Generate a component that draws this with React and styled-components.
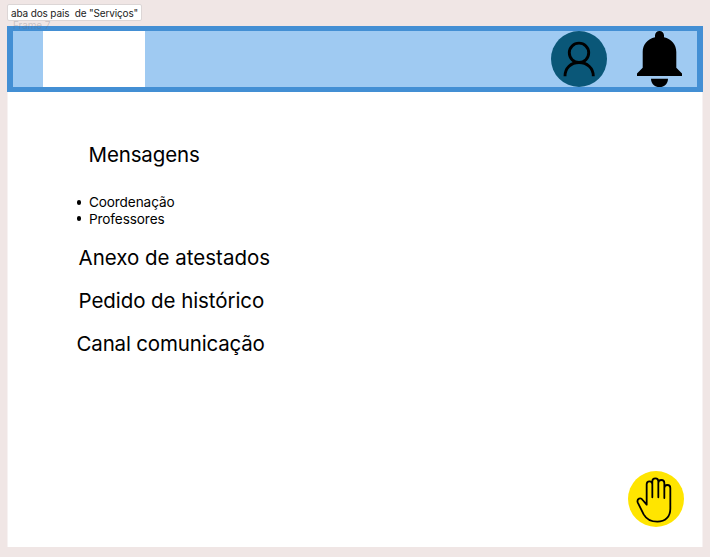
import React from "react";
import styled, { createGlobalStyle } from "styled-components";

const GlobalStyle = createGlobalStyle`
  * { box-sizing: border-box; }
  body { margin: 0; background: #f0e6e5; overflow: hidden; }
`;

const Canvas = styled.main`
  position: relative;
  width: 710px;
  height: 557px;
  padding: 26px 7px 10px;
  font-family: Inter, sans-serif;
  color: #000;
`;

const FrameLabel = styled.span`
  position: absolute;
  left: 13px;
  top: 19px;
  font-size: 10px;
  line-height: 12px;
  letter-spacing: -0.1px;
  color: rgba(110, 110, 120, 0.32);
`;

const NameTag = styled.div`
  position: absolute;
  left: 7px;
  top: 4px;
  width: 135px;
  height: 17px;
  padding-left: 3px;
  border: 1px solid #dcd6d6;
  border-radius: 2px;
  background: #fff;
  font-size: 10px;
  line-height: 16px;
  letter-spacing: -0.14px;
  white-space: pre;
  color: #222;
`;

const Page = styled.section`
  display: flex;
  flex-direction: column;
  width: 696px;
  height: 521px;
  border-left: 1px solid #f7f2f2;
  border-right: 1px solid #f7f2f2;
  background: #fff;
`;

const Header = styled.header`
  display: flex;
  align-items: center;
  flex: none;
  height: 66px;
  margin: 0 -1px;
  padding: 0 15px 0 30px;
  border: solid #438fd4;
  border-width: 5px 6px;
  background: #9fcaf2;
`;

const Logo = styled.div`
  width: 102px;
  height: 56px;
  margin-right: auto;
  background: #fff;
`;

const Avatar = styled.svg`
  width: 56px;
  height: 56px;
  margin-right: 30px;
`;

const Bell = styled.svg`
  width: 45px;
  height: 56px;
`;

const Content = styled.div`
  display: flex;
  flex-direction: column;
  align-items: flex-start;
  padding: 50px 0 0 68.5px;
`;

const Heading = styled.h2`
  margin: 0 0 ${(p) => p.$gap || 0}px ${(p) => p.$indent || 0}px;
  font-size: 20.5px;
  font-weight: 400;
  line-height: 26px;
  letter-spacing: ${(p) => p.$tracking || 0}px;
  white-space: nowrap;
`;

const List = styled.ul`
  margin: 0 0 18px;
  padding: 0;
  list-style: none;
`;

const Item = styled.li`
  display: flex;
  align-items: center;
  height: 16.5px;
  font-size: 13.6px;
  letter-spacing: -0.1px;

  &::before {
    content: "";
    width: 4.6px;
    height: 4.6px;
    margin-right: 7.8px;
    border-radius: 50%;
    background: #000;
  }
`;

const HandButton = styled.svg`
  width: 56px;
  height: 56px;
  margin: auto 17.8px 20px auto;
`;

export default function App() {
  return (
    <Canvas>
      <GlobalStyle />
      <Page>
        <Header>
          <Logo />
          <Avatar viewBox="0 0 56 56">
            <circle cx="28" cy="28" r="28" fill="#0a5778" />
            <g fill="none" stroke="#000" strokeWidth="2.9">
              <circle cx="28" cy="21.8" r="9.7" />
              <path d="M14 45.2C14 37 20 31.5 28 31.5S42.3 37 42.3 45.2" />
            </g>
          </Avatar>
          <Bell viewBox="0 0 45 56">
            <path d="M18 6.2V4.5a4.5 4.5 0 0 1 9 0v1.7C34.5 8 39.3 13.5 39.3 21V36.8L45 42.4V45H0V42.4L5.7 36.8V21C5.7 13.5 10.5 8 18 6.2Z" />
            <path d="M14 47.7H31C31 52.5 27.5 56 22.5 56S14 52.5 14 47.7Z" />
          </Bell>
        </Header>
        <Content>
          <Heading $indent={12} $gap={26} $tracking={-0.14}>Mensagens</Heading>
          <List>
            <Item>Coordenação</Item>
            <Item>Professores</Item>
          </List>
          <Heading $indent={2} $gap={17}>Anexo de atestados</Heading>
          <Heading $indent={2} $gap={17} $tracking={-0.07}>Pedido de histórico</Heading>
          <Heading $tracking={-0.17}>Canal comunicação</Heading>
        </Content>
        <HandButton viewBox="39 33 168 168">
          <circle cx="123" cy="117" r="84" fill="#ffe500" />
          <path
            d="M95 134V73C95 61 112 61 112 73V112M112 73V64C112 52 130 52 130 64V112M130 69C130 57 148 57 148 69V114M148 84C148 72 166 72 166 84V146C166 170 151 185 127 185C106 185 94 177 86 163L68 127C65 116 77 111 83 120L95 134"
            fill="none"
            stroke="#000"
            strokeWidth="5.4"
            strokeLinecap="round"
            strokeLinejoin="round"
          />
        </HandButton>
      </Page>
      <FrameLabel>Frame 7</FrameLabel>
      <NameTag>{'aba dos pais  de "Serviços"'}</NameTag>
    </Canvas>
  );
}
